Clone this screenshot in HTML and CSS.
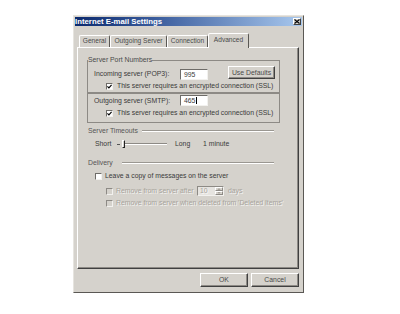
FILE: index.html
```html
<!DOCTYPE html>
<html>
<head>
<meta charset="utf-8">
<link rel="stylesheet" href="styles.css">
</head>
<body>
<div class="dialog">
  <div class="titlebar">
    <span class="title">Internet E-mail Settings</span>
    <span class="close"><svg width="6" height="5" viewBox="0 0 6 5"><path d="M0.5 0.5 L5.5 4.5 M5.5 0.5 L0.5 4.5" stroke="#000" stroke-width="1.1" fill="none"/></svg></span>
  </div>
  <div class="tabs">
    <div class="tab t1">General</div>
    <div class="tab t2">Outgoing Server</div>
    <div class="tab t3">Connection</div>
    <div class="tab t4 active">Advanced</div>
  </div>
  <div class="panel">
    <fieldset class="group g1">
      <legend>Server Port Numbers</legend>
      <div class="row ra">
        <span class="lbl">Incoming server (POP3):</span>
        <span class="edit">995</span>
        <span class="btn defaults">Use Defaults</span>
      </div>
      <div class="row rb">
        <span class="chk"><svg width="5" height="5" viewBox="0 0 5 5"><path d="M0.4 2.3 L1.9 3.8 L4.6 0.8" stroke="#000" stroke-width="1.2" fill="none"/></svg></span>
        <span>This server requires an encrypted connection (SSL)</span>
      </div>
    </fieldset>
    <div class="group g2">
      <div class="row rc">
        <span class="lbl">Outgoing server (SMTP):</span>
        <span class="edit">465<span class="caret"></span></span>
      </div>
      <div class="row rd">
        <span class="chk"><svg width="5" height="5" viewBox="0 0 5 5"><path d="M0.4 2.3 L1.9 3.8 L4.6 0.8" stroke="#000" stroke-width="1.2" fill="none"/></svg></span>
        <span>This server requires an encrypted connection (SSL)</span>
      </div>
    </div>
    <div class="header h-timeouts">
      <span class="hl">Server Timeouts</span>
      <span class="line"></span>
    </div>
    <div class="row slider-row">
      <span class="short">Short</span>
      <span class="slider"><span class="tick"></span><span class="track"></span><span class="thumb"></span></span>
      <span class="long">Long</span>
      <span>1 minute</span>
    </div>
    <div class="header h-delivery">
      <span class="hl">Delivery</span>
      <span class="line"></span>
    </div>
    <div class="row c1">
      <span class="chk"></span>
      <span>Leave a copy of messages on the server</span>
    </div>
    <div class="row c2 disabled">
      <span class="chk"></span>
      <span class="after">Remove from server after</span>
      <span class="spin"><span class="spin-val">10</span><span class="spin-btns"><span class="sb"><svg width="5" height="3" viewBox="0 0 5 3"><path d="M2.5 0 L5 3 L0 3 Z" fill="#a7a39b"/></svg></span><span class="sb"><svg width="5" height="3" viewBox="0 0 5 3"><path d="M0 0 L5 0 L2.5 3 Z" fill="#a7a39b"/></svg></span></span></span>
      <span class="days">days</span>
    </div>
    <div class="row c3 disabled">
      <span class="chk"></span>
      <span>Remove from server when deleted from 'Deleted Items'</span>
    </div>
  </div>
  <div class="buttons">
    <span class="btn ok">OK</span>
    <span class="btn cancel">Cancel</span>
  </div>
</div>
</body>
</html>
```
FILE: styles.css
```css
html, body {
  margin: 0;
  padding: 0;
  background: #fff;
}
body {
  width: 400px;
  height: 314px;
  overflow: hidden;
  font-family: "Liberation Sans", Arial, sans-serif;
  font-size: 6.85px;
  line-height: 8px;
  color: #3a3a3a;
}
.dialog {
  margin: 15px 0 0 73px;
  width: 231px;
  height: 278px;
  box-sizing: border-box;
  background: #d5d2cc;
  border: 1px solid;
  border-color: #e6e4df #5a5854 #5a5854 #e6e4df;
  padding: 1px;
  display: flex;
  flex-direction: column;
}
.titlebar {
  height: 9px;
  flex: none;
  background: linear-gradient(90deg, #0c2a6e 0%, #3a5c9c 35%, #a8c8ee 100%);
  display: flex;
  align-items: center;
  justify-content: space-between;
  padding: 0 1px 0 0;
}
.title {
  color: #fff;
  font-weight: bold;
  font-size: 7.8px;
  line-height: 9px;
  white-space: nowrap;
}
.close {
  width: 8px;
  height: 7px;
  box-sizing: border-box;
  background: #d5d2cc;
  border: 1px solid;
  border-color: #fff #404040 #404040 #fff;
  display: flex;
  align-items: center;
  justify-content: center;
}
.close svg { display: block; }
.tabs {
  display: flex;
  align-items: flex-end;
  height: 14px;
  margin: 7px 0 0 4px;
  flex: none;
  position: relative;
  z-index: 1;
}
.tab {
  height: 12px;
  box-sizing: border-box;
  border: 1px solid;
  border-bottom: none;
  border-color: #fff #5a5854 transparent #fff;
  border-radius: 2px 2px 0 0;
  padding: 0;
  text-align: center;
  white-space: nowrap;
  line-height: 10px;
  color: #4a4a4a;
  font-size: 6.6px;
}
.t1 { width: 31px; }
.t2 { width: 57px; }
.t3 { width: 41px; }
.t4 { width: 41px; }
.tab.active {
  height: 15px;
  margin-bottom: -1px;
  background: #d5d2cc;
  line-height: 11px;
}
.panel {
  margin: 0 3px 0 2px;
  height: 222px;
  box-sizing: border-box;
  border: 1px solid;
  border-color: #fff #404040 #404040 #fff;
  box-shadow: inset -1px -1px 0 #8d8a85;
  padding: 8px 0 0 9px;
  flex: none;
}
.group {
  width: 193px;
  box-sizing: border-box;
  border: 1px solid #8d8a85;
  margin: 0;
  padding: 0;
  min-width: 0;
}
legend {
  padding: 0;
  margin: 0;
  line-height: 8px;
  color: #4a4a4a;
}
.row {
  display: flex;
  align-items: center;
  white-space: nowrap;
}
.lbl { width: 86px; flex: none; }
.ra {
  height: 15px;
  margin-top: 1px;
  padding-left: 6px;
  align-items: flex-end;
}
.ra .lbl { margin-bottom: 2px; }
.edit {
  width: 28px;
  height: 11px;
  box-sizing: border-box;
  background: #fff;
  border: 1px solid;
  border-color: #6e6c68 #f2f1ee #f2f1ee #6e6c68;
  padding-left: 3px;
  line-height: 9px;
  display: flex;
  align-items: center;
  flex: none;
}
.caret {
  display: inline-block;
  width: 1px;
  height: 7px;
  background: #000;
  margin-left: 1px;
}
.btn {
  box-sizing: border-box;
  border: 1px solid;
  border-color: #fff #404040 #404040 #fff;
  box-shadow: inset -1px -1px 0 #8d8a85;
  background: #d5d2cc;
  display: flex;
  align-items: center;
  justify-content: center;
  color: #4a4a4a;
  flex: none;
}
.defaults {
  width: 47px;
  height: 13px;
  margin-left: 20px;
  margin-bottom: 1px;
}
.rb {
  height: 12px;
  padding-left: 18px;
}
.chk {
  width: 7px;
  height: 7px;
  box-sizing: border-box;
  background: #fff;
  border: 1px solid;
  border-color: #6e6c68 #f2f1ee #f2f1ee #6e6c68;
  margin-right: 4px;
  display: flex;
  align-items: center;
  justify-content: center;
  flex: none;
}
.chk svg { display: block; }
.g2 {
  padding-bottom: 3px;
}
.rc {
  height: 13px;
  padding-left: 6px;
}
.rd {
  height: 12px;
  padding-left: 18px;
}
.header {
  display: flex;
  align-items: center;
  height: 8px;
  width: 187px;
  padding-left: 1px;
  box-sizing: border-box;
}
.h-timeouts { margin-top: 4px; }
.h-timeouts .hl { width: 54px; flex: none; }
.h-delivery { margin-top: 10px; }
.h-delivery .hl { width: 34px; flex: none; }
.hl { color: #555; white-space: nowrap; }
.line {
  flex: 1;
  height: 1px;
  background: #9a9791;
  border-bottom: 1px solid #fff;
}
.slider-row {
  height: 10px;
  margin-top: 4px;
  padding-left: 8px;
}
.short { width: 22px; flex: none; }
.slider {
  width: 50px;
  height: 10px;
  flex: none;
  display: flex;
  align-items: center;
}
.tick {
  width: 3px;
  height: 1px;
  background: #555;
  flex: none;
}
.track {
  width: 2px;
  height: 2px;
  flex: none;
}
.thumb {
  width: 3px;
  height: 8px;
  box-sizing: border-box;
  border: 1px solid;
  border-color: #fff #222 #222 #fff;
  background: #d5d2cc;
  flex: none;
}
.slider::after {
  content: "";
  flex: 1;
  height: 1px;
  background: #8d8a85;
  border-bottom: 1px solid #fff;
}
.long { width: 28px; flex: none; margin-left: 8px; }
.c1 {
  height: 10px;
  margin-top: 4px;
  padding-left: 8px;
}
.c1 .chk { margin-right: 3px; }
.c2 {
  height: 10px;
  margin-top: 5px;
  padding-left: 19px;
}
.c3 {
  height: 10px;
  margin-top: 2px;
  padding-left: 19px;
}
.disabled .chk {
  background: #d5d2cc;
  border-color: #8d8a85 #f2f1ee #f2f1ee #8d8a85;
  margin-right: 3px;
}
.disabled {
  color: #a7a39b;
  text-shadow: 1px 1px 0 rgba(255,255,255,0.75);
}
.after { width: 81px; flex: none; }
.spin {
  width: 27px;
  height: 10px;
  box-sizing: border-box;
  border: 1px solid;
  border-color: #8d8a85 #f2f1ee #f2f1ee #8d8a85;
  background: #e6e4e0;
  display: flex;
  flex: none;
}
.spin-val {
  flex: 1;
  padding-left: 2px;
  line-height: 8px;
}
.spin-btns {
  width: 8px;
  display: flex;
  flex-direction: column;
}
.sb {
  flex: 1;
  box-sizing: border-box;
  border: 1px solid;
  border-color: #fff #8d8a85 #8d8a85 #fff;
  background: #d5d2cc;
  display: flex;
  align-items: center;
  justify-content: center;
}
.sb svg { display: block; width: 4px; height: 2px; }
.days { margin-left: 4px; }
.buttons {
  display: flex;
  justify-content: flex-end;
  gap: 3px;
  margin: 4px 3px 0 0;
  flex: none;
}
.ok, .cancel {
  width: 48px;
  height: 14px;
}
```
